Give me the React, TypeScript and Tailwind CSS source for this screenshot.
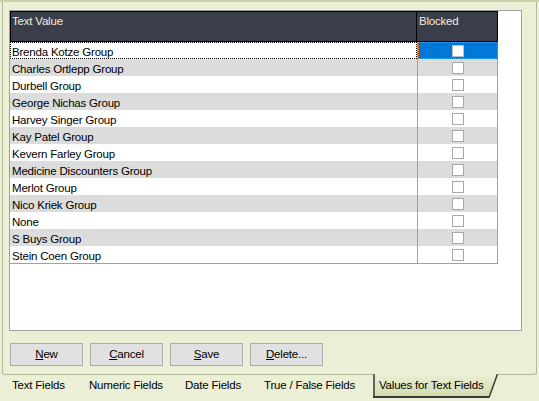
import React from "react";

const rows = [
  "Brenda Kotze Group",
  "Charles Ortlepp Group",
  "Durbell Group",
  "George Nichas Group",
  "Harvey Singer Group",
  "Kay Patel Group",
  "Kevern Farley Group",
  "Medicine Discounters Group",
  "Merlot Group",
  "Nico Kriek Group",
  "None",
  "S Buys Group",
  "Stein Coen Group",
];

const font = { fontFamily: '"Liberation Sans", Arial, sans-serif' };

function Btn({ first, rest }: { first: string; rest: string }) {
  return (
    <div className="w-[73px] h-[23px] border border-[#adadad] bg-[#e1e1e1] flex items-center justify-center text-black text-[11.5px] tracking-[-0.2px]">
      <span className="underline underline-offset-[1px]">{first}</span>
      <span>{rest}</span>
    </div>
  );
}

export default function App() {
  return (
    <div
      className="w-[539px] h-[401px] bg-[#ebefd6] overflow-hidden flex flex-col text-[11px] tracking-[-0.2px] text-black"
      style={font}
    >
      <div className="h-[2px] bg-[#c8d2aa] shrink-0" />
      <div className="ml-[2px] w-[535px] h-[373px] shrink-0 border-l border-r border-b border-[#b3bb99] rounded-b-[3px] pt-[8px] pl-[6px] flex flex-col">
        <div className="w-[513px] h-[321px] border border-[#a0a0a0] bg-white">
          {/* header */}
          <div className="w-[488px] h-[31px] bg-[#393e4a] border border-black flex text-[#f2f0dc] text-[11.5px]">
            <div className="w-[406px] pl-[1px] pt-[2px] border-r border-black leading-[14px]">Text Value</div>
            <div className="w-[79px] pl-[2px] pt-[2px] leading-[14px]">Blocked</div>
          </div>
          {/* rows */}
          <div className="w-[488px] border-b border-[#a0a0a0]">
            {rows.map((r, i) => {
              const sel = i === 0;
              const bg = i % 2 === 1 ? "bg-[#dcdcdc]" : "bg-white";
              return (
                <div key={r} className={`flex h-[17px] ${bg}`}>
                  <div
                    className={
                      sel
                        ? "w-[407px] pl-[1px] pt-[2px] border border-dotted border-black flex items-center leading-[14px] text-[11.5px]"
                        : "w-[407px] pl-[2px] pt-[2px] flex items-center leading-[14px] text-[11.5px]"
                    }
                  >
                    {r}
                  </div>
                  <div
                    className={
                      sel
                        ? "w-[81px] border-l border-[#a0a0a0] flex items-center justify-center"
                        : "w-[81px] border-l border-r border-[#a0a0a0] flex items-center justify-center"
                    }
                  >
                    {sel ? (
                      <div className="w-full h-full bg-[#0078d7] border border-dotted border-[#f08020] flex items-center justify-center">
                        <div className="w-[12px] h-[12px] bg-white border border-[#c0c0c0]" />
                      </div>
                    ) : (
                      <div className="w-[12px] h-[12px] bg-white border border-[#a8a8a8]" />
                    )}
                  </div>
                </div>
              );
            })}
          </div>
        </div>
        <div className="mt-[12px] ml-[1px] flex gap-[7px]">
          <Btn first="N" rest="ew" />
          <Btn first="C" rest="ancel" />
          <Btn first="S" rest="ave" />
          <Btn first="D" rest="elete..." />
        </div>
      </div>
      {/* tabs */}
      <div className="-mt-[1px] flex items-start pl-[12px] h-[27px] text-[11.5px]">
        <div className="w-[77px] pt-[4px] leading-[14px]">Text Fields</div>
        <div className="w-[96px] pt-[4px] leading-[14px]">Numeric Fields</div>
        <div className="w-[79px] pt-[4px] leading-[14px]">Date Fields</div>
        <div className="w-[109px] pt-[4px] leading-[14px]">True / False Fields</div>
        <div className="relative w-[126px] h-[25px]">
          <svg className="absolute inset-0" width="126" height="25" viewBox="0 0 126 25">
            <defs>
              <linearGradient id="tabg" x1="0" y1="0" x2="0" y2="1">
                <stop offset="0" stopColor="#ebefd6" />
                <stop offset="1" stopColor="#d2dbad" />
              </linearGradient>
            </defs>
            <polygon points="0,0 125,0 116,23 0,23" fill="url(#tabg)" />
            <line x1="1" y1="0" x2="1" y2="24" stroke="#3a3a3a" strokeWidth="1.5" />
            <line x1="0" y1="23" x2="116" y2="23" stroke="#3a3a3a" strokeWidth="2" />
            <line x1="124.5" y1="0" x2="116" y2="23.5" stroke="#3a3a3a" strokeWidth="1.5" />
          </svg>
          <div className="relative pl-[6px] pt-[4px] leading-[14px]">Values for Text Fields</div>
        </div>
      </div>
    </div>
  );
}
